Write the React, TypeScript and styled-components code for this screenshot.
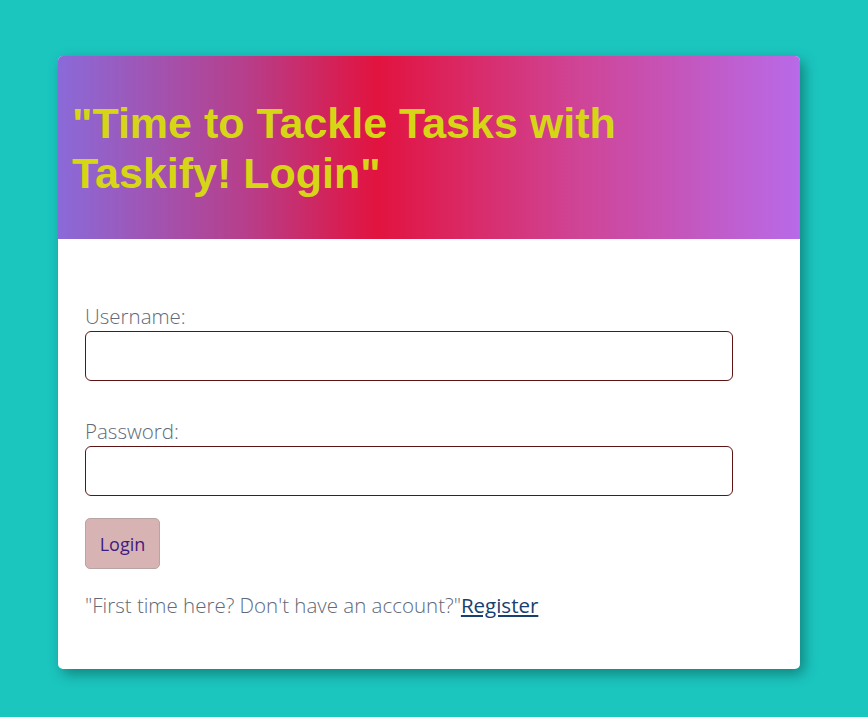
import React from "react";
import styled, {createGlobalStyle} from "styled-components";

const GlobalStyle = createGlobalStyle`
  html, body {
    margin: 0;
    padding: 0;
    background: #1bc6bf;
  }

  body {
    font-family: "Open Sans", "Noto Sans", sans-serif;
  }
`;

const Page = styled.div`
  min-height: 717px;
  padding: 56px 68px 48px 58px;
  box-sizing: border-box;
`;

const Card = styled.div`
  width: 742px;
  background: #ffffff;
  border-radius: 5px;
  overflow: hidden;
  box-shadow: 4px 5px 14px rgba(0, 0, 0, 0.35);
`;

const Header = styled.header`
  height: 183px;
  display: flex;
  align-items: center;
  padding: 0 14px;
  box-sizing: border-box;
  background: linear-gradient(
    to right,
    #8a6ad9 0%,
    #b63f8c 25%,
    #e2133f 43%,
    #cf4496 70%,
    #b86ae8 100%
  );
`;

const Title = styled.h1`
  margin: 0;
  max-width: 640px;
  font-family: "Liberation Sans", Arial, sans-serif;
  font-weight: 700;
  font-size: 43px;
  line-height: 50px;
  color: #d6d617;
`;

const Form = styled.form`
  display: flex;
  flex-direction: column;
  padding: 62px 27px 49px;
`;

const Field = styled.div`
  display: flex;
  flex-direction: column;
  margin-bottom: 35px;

  &:last-of-type {
    margin-bottom: 22px;
  }
`;

const Label = styled.label`
  font-size: 20.5px;
  font-weight: 300;
  line-height: 30px;
  color: #606a78;
`;

const Input = styled.input`
  width: 648px;
  height: 50px;
  box-sizing: border-box;
  border: 1px solid #5c1414;
  border-radius: 6px;
  padding: 0 12px;
  font-size: 18px;
  background: #ffffff;
`;

const Button = styled.button`
  align-self: flex-start;
  width: 75px;
  height: 51px;
  background: #d8b3b4;
  border: 1px solid #b8a4a4;
  border-radius: 5px;
  color: #3d1c82;
  font-family: "Open Sans", "Noto Sans", sans-serif;
  font-size: 18px;
  cursor: pointer;
`;

const Footer = styled.p`
  margin: 21px 0 0;
  font-size: 20.5px;
  font-weight: 300;
  line-height: 30px;
  color: #606a78;
`;

const RegisterLink = styled.a`
  color: #17406e;
  font-weight: 400;
  text-decoration: underline;
`;

const App: React.FC = () => {
    return (
        <>
            <GlobalStyle/>
            <Page>
                <Card>
                    <Header>
                        <Title>"Time to Tackle Tasks with Taskify! Login"</Title>
                    </Header>
                    <Form onSubmit={(e) => e.preventDefault()}>
                        <Field>
                            <Label htmlFor="username">Username:</Label>
                            <Input id="username" type="text"/>
                        </Field>
                        <Field>
                            <Label htmlFor="password">Password:</Label>
                            <Input id="password" type="password"/>
                        </Field>
                        <Button type="submit">Login</Button>
                        <Footer>
                            "First time here? Don't have an account?"
                            <RegisterLink href="#">Register</RegisterLink>
                        </Footer>
                    </Form>
                </Card>
            </Page>
        </>
    );
};

export default App;
